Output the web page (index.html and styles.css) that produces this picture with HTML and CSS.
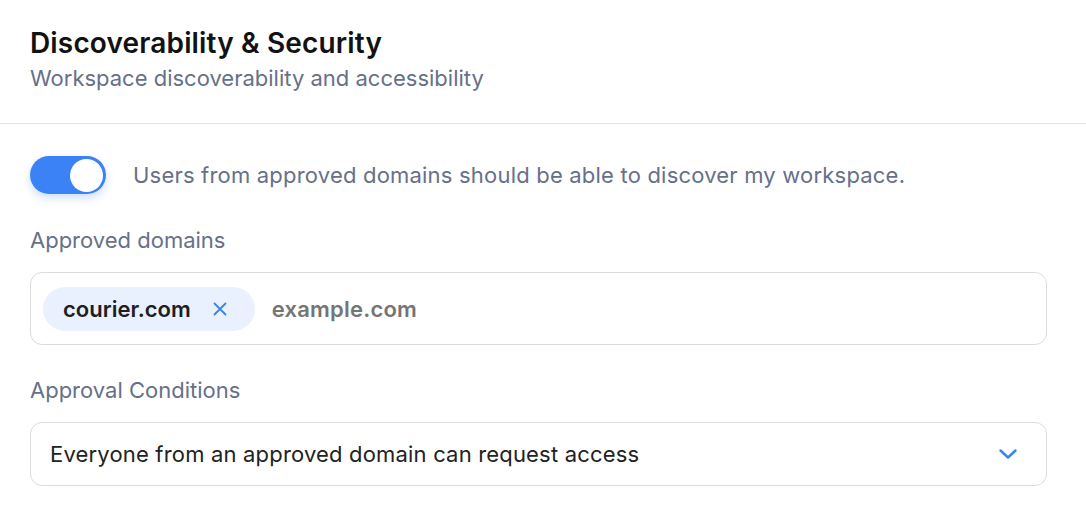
FILE: index.html
```html
<!DOCTYPE html>
<html>
<head>
<meta charset="utf-8">
<link rel="stylesheet" href="styles.css">
</head>
<body>
<div class="panel">
  <header class="head">
    <h1 class="title">Discoverability &amp; Security</h1>
    <p class="subtitle">Workspace discoverability and accessibility</p>
  </header>
  <div class="body">
    <div class="toggle-row">
      <span class="toggle"><span class="knob"></span></span>
      <span class="toggle-label">Users from approved domains should be able to discover my workspace.</span>
    </div>
    <div class="field">
      <div class="label">Approved domains</div>
      <div class="tag-input">
        <span class="chip">courier.com
          <svg class="chip-x" width="14" height="14" viewBox="0 0 14 14"><path d="M1.5 1.5 L12.5 12.5 M12.5 1.5 L1.5 12.5" stroke="#3b82f6" stroke-width="1.8" stroke-linecap="round"/></svg>
        </span>
        <span class="placeholder">example.com</span>
      </div>
    </div>
    <div class="field">
      <div class="label">Approval Conditions</div>
      <div class="select">
        <span>Everyone from an approved domain can request access</span>
        <svg class="chev" width="18" height="10" viewBox="0 0 18 10"><path d="M1.5 1.5 L9 8.5 L16.5 1.5" fill="none" stroke="#3b82f6" stroke-width="2.4" stroke-linecap="round" stroke-linejoin="round"/></svg>
      </div>
    </div>
  </div>
</div>
</body>
</html>
```
FILE: styles.css
```css
* { box-sizing: border-box; }
html, body { margin: 0; padding: 0; background: #fff; }
body { font-family: Inter, "Noto Sans", sans-serif; }
.head {
  padding: 26px 30px 0 30px;
  height: 124px;
  border-bottom: 1px solid #e2e2e2;
}
.title {
  margin: 0;
  font-size: 28px;
  font-weight: 600;
  line-height: 34px;
  color: #121212;
  letter-spacing: 0.15px;
}
.subtitle {
  margin: 4px 0 0 0;
  font-size: 22px;
  line-height: 28px;
  color: #667089;
}
.body {
  padding: 32px 39px 0 30px;
}
.toggle-row {
  display: flex;
  align-items: center;
  gap: 27px;
}
.toggle {
  width: 76px;
  height: 38px;
  border-radius: 19px;
  background: #3b82f6;
  display: flex;
  align-items: center;
  justify-content: flex-end;
  padding-right: 3px;
  box-shadow: 0 4px 8px rgba(59,130,246,0.25);
  flex: none;
}
.knob {
  width: 33px;
  height: 33px;
  border-radius: 50%;
  background: #fff;
}
.toggle-label {
  font-size: 22px;
  line-height: 28px;
  color: #667089;
  letter-spacing: 0.2px;
}
.field { margin-top: 32px; }
.field + .field { margin-top: 31px; }
.label {
  font-size: 22px;
  line-height: 28px;
  color: #667089;
}
.tag-input {
  margin-top: 18px;
  height: 73px;
  border: 1px solid #dcdce0;
  border-radius: 12px;
  display: flex;
  align-items: center;
  padding-left: 12px;
  gap: 17px;
}
.chip {
  display: flex;
  align-items: center;
  height: 44px;
  padding: 0 28px 0 20px;
  border-radius: 22px;
  background: #e8f1fd;
  font-size: 22px;
  font-weight: 600;
  color: #1f1f1f;
  gap: 22px;
}
.placeholder {
  font-size: 22px;
  font-weight: 600;
  color: #757575;
  letter-spacing: 0.2px;
}
.select {
  margin-top: 18px;
  height: 64px;
  border: 1px solid #dcdce0;
  border-radius: 12px;
  display: flex;
  align-items: center;
  justify-content: space-between;
  padding: 0 29px 0 19px;
  font-size: 22px;
  color: #222;
  letter-spacing: 0.18px;
}
```
